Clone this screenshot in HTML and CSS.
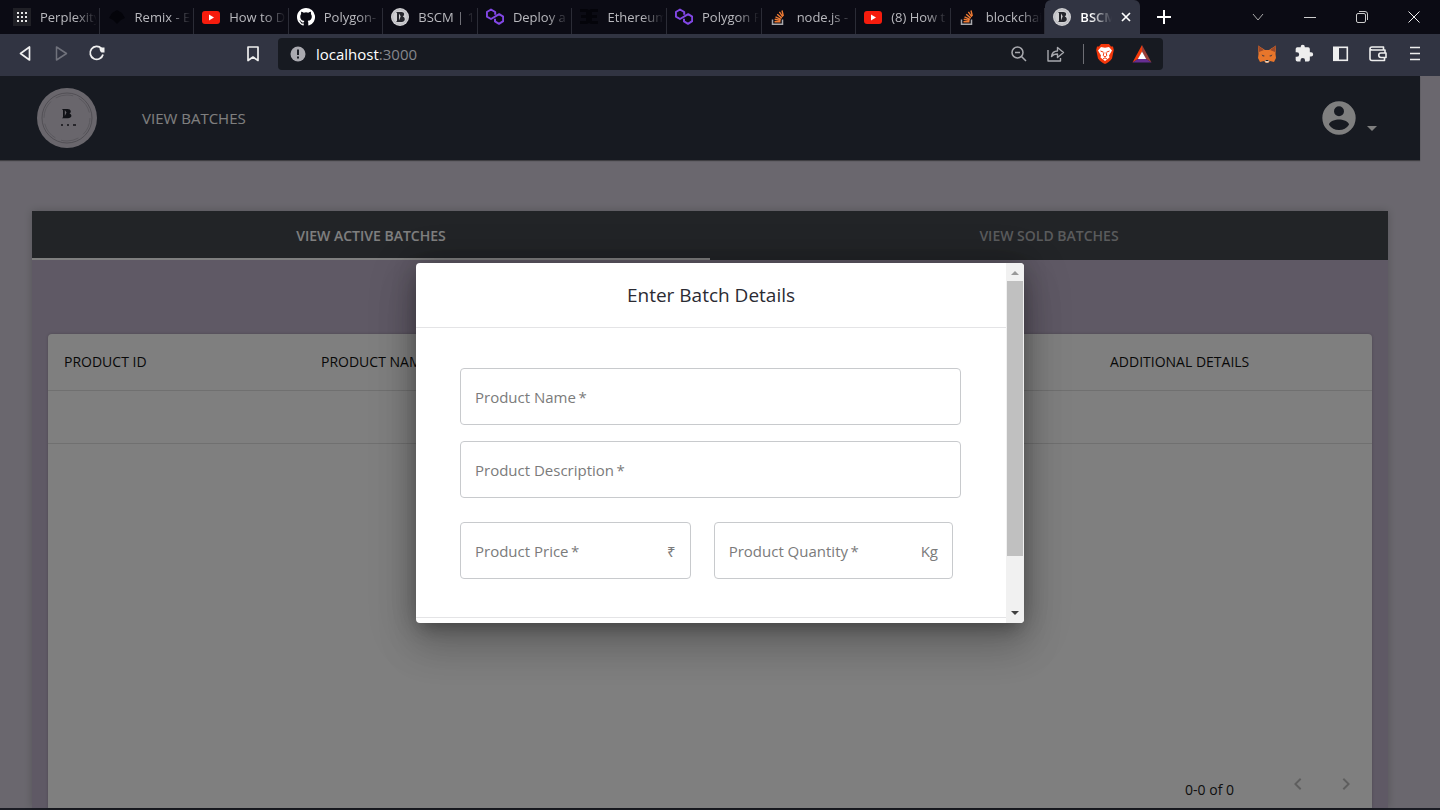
FILE: index.html
```html
<!DOCTYPE html>
<html lang="en">
<head>
<meta charset="utf-8">
<meta name="viewport" content="width=device-width, initial-scale=1">
<title>BSCM</title>
<link rel="stylesheet" href="styles.css">
</head>
<body>
<svg class="defs" aria-hidden="true">
  <symbol id="i-youtube" viewBox="0 0 18 18"><rect y="3" width="18" height="13" rx="3" fill="#f61c0d"/><path d="M7 6.5v6l5-3z" fill="#fff"/></symbol>
  <symbol id="i-polygon" viewBox="0 0 18 18"><path d="M9.200 6.800V4L5 1.500.9 4v4.600L5 11l8.200-4.800 4 2.400v4.600L13 15.800l-4-2.400v-2.600" fill="none" stroke="#8247e5" stroke-width="2" stroke-linejoin="round"/></symbol>
  <symbol id="i-stack" viewBox="0 0 18 18"><path d="M2.500 11.500v4.700h10v-4.700" fill="none" stroke="#a9a9ad" stroke-width="1.500"/><path d="M4.500 13.700h6M4.700 11.300l5.900 1.200M5.500 8.800l5.400 2.500M7.200 6.200l4.600 3.900M9.400 3.900l3.400 4.900M12 2.500l1.300 5.500" fill="none" stroke="#ef7b34" stroke-width="1.400"/></symbol>
  <symbol id="i-bscm" viewBox="0 0 18 18"><circle cx="9" cy="9" r="9" fill="#cfcfd2"/><circle cx="9" cy="9" r="7.300" fill="none" stroke="#a5a5aa" stroke-width=".5"/><path d="M5 4h5.500c3 0 3.500 3.300 1.200 4.500 3.200 1 2.600 5.500-.9 5.500H5l1-1V5zM8 5.500L9.700 8.300 8 12.500z" fill="#25262c" fill-rule="evenodd"/></symbol>
</svg>

<header class="browser">
  <div class="tabstrip">
    <nav class="tabs" aria-label="Browser tabs">
      <a class="tab" href="#"><svg class="fav" viewBox="0 0 18 18"><rect width="18" height="18" fill="#202026"/><g fill="#e6e6e6"><path d="M4 4h2v2H4zM8 4h2v2H8zM12 4h2v2h-2zM4 8h2v2H4zM8 8h2v2H8zM12 8h2v2h-2zM4 12h2v2H4zM8 12h2v2H8zM12 12h2v2h-2z"/></g></svg><span class="tab-title">Perplexity</span></a>
      <a class="tab" href="#"><svg class="fav" viewBox="0 0 18 18"><path d="M1 10l3-5 5-3 5 3 3 5-4 2-4 4-4-4z" fill="#04040a"/></svg><span class="tab-title">Remix - E</span></a>
      <a class="tab" href="#"><svg class="fav"><use href="#i-youtube"/></svg><span class="tab-title">How to D</span></a>
      <a class="tab" href="#"><svg class="fav" viewBox="0 0 16 16"><path fill="#fff" d="M8 0C3.580 0 0 3.580 0 8c0 3.540 2.290 6.530 5.470 7.590.4.070.55-.17.55-.38v-1.490c-2.010.37-2.530-.49-2.690-.94-.09-.23-.48-.94-.82-1.130-.28-.15-.68-.52-.01-.53.63-.01 1.080.58 1.230.82.72 1.210 1.870.87 2.330.66.07-.52.28-.87.51-1.070-1.780-.2-3.640-.89-3.640-3.950 0-.87.31-1.590.82-2.150-.08-.2-.36-1.020.08-2.120 0 0 .67-.21 2.200.82a7.400 7.400 0 014 0c1.530-1.040 2.200-.82 2.200-.82.44 1.100.16 1.920.08 2.120.51.56.82 1.270.82 2.150 0 3.070-1.870 3.750-3.650 3.950.29.25.54.73.54 1.480v2.200c0 .21.15.46.55.38A8 8 0 008 0z"/></svg><span class="tab-title">Polygon-</span></a>
      <a class="tab" href="#"><svg class="fav"><use href="#i-bscm"/></svg><span class="tab-title">BSCM | 1</span></a>
      <a class="tab" href="#"><svg class="fav"><use href="#i-polygon"/></svg><span class="tab-title">Deploy a</span></a>
      <a class="tab" href="#"><svg class="fav" viewBox="0 0 18 18"><path d="M0 1h7l2 1 2-1h7v3h-6v3h5v3h-5v3h6v3h-7l-2-1-2 1H0v-3h6v-3H1V7h5V4H0z" fill="#04040a"/></svg><span class="tab-title">Ethereum</span></a>
      <a class="tab" href="#"><svg class="fav"><use href="#i-polygon"/></svg><span class="tab-title">Polygon F</span></a>
      <a class="tab" href="#"><svg class="fav"><use href="#i-stack"/></svg><span class="tab-title">node.js -</span></a>
      <a class="tab" href="#"><svg class="fav"><use href="#i-youtube"/></svg><span class="tab-title">(8) How t</span></a>
      <a class="tab" href="#"><svg class="fav"><use href="#i-stack"/></svg><span class="tab-title">blockchai</span></a>
      <a class="tab tab-active" href="#"><svg class="fav"><use href="#i-bscm"/></svg><span class="tab-title">BSCM</span><svg class="tab-close" viewBox="0 0 10 10"><path d="M1 1l8 8M9 1L1 9" stroke="#fff" stroke-width="1.700"/></svg></a>
    </nav>
    <button class="new-tab" aria-label="New tab"><svg width="14" height="14" viewBox="0 0 14 14"><path d="M7 0v14M0 7h14" stroke="#fff" stroke-width="2"/></svg></button>
    <div class="window-controls">
      <button aria-label="Search tabs"><svg width="12" height="12" viewBox="0 0 12 12"><path d="M1 3l5 6 5-6" fill="none" stroke="#aaa"/></svg></button>
      <button aria-label="Minimize"><svg width="12" height="12" viewBox="0 0 12 12"><path d="M0 6.500h12" stroke="#ccc"/></svg></button>
      <button aria-label="Restore"><svg width="12" height="12" viewBox="0 0 12 12"><rect x=".5" y="2.500" width="9" height="9" rx="1.500" fill="none" stroke="#ccc"/><path d="M3 .5h6Q11.500.5 11.500 3v6" fill="none" stroke="#ccc"/></svg></button>
      <button aria-label="Close"><svg width="12" height="12" viewBox="0 0 12 12"><path d="M.5.5l11 11M11.500.5l-11 11" stroke="#eee"/></svg></button>
    </div>
  </div>

  <div class="toolbar">
    <div class="nav-buttons">
      <button aria-label="Back"><svg class="ico" viewBox="0 0 20 20"><path d="M14.500 3v13L5.500 9.500z" fill="none" stroke="#f0f0f0" stroke-width="1.700" stroke-linejoin="round"/></svg></button>
      <button aria-label="Forward"><svg class="ico" viewBox="0 0 20 20"><path d="M5.500 3v13l10-6.500z" fill="none" stroke="#70727c" stroke-width="1.500" stroke-linejoin="round"/></svg></button>
      <button aria-label="Reload"><svg class="ico" viewBox="0 0 20 20"><path d="M14.500 4.500A6.500 6.500 0 1 0 16 10.500" fill="none" stroke="#f0f0f0" stroke-width="1.800"/><path d="M12.500 3.500h5v5h-3q-2-1-2-5z" fill="#f0f0f0"/></svg></button>
      <button class="bookmark" aria-label="Bookmark"><svg class="ico" viewBox="0 0 20 20"><path d="M5 3h10v13.500l-5-3.500-5 3.500z" fill="none" stroke="#eee" stroke-width="1.700" stroke-linejoin="round"/></svg></button>
    </div>
    <div class="address">
      <svg class="site-info" viewBox="0 0 16 16"><circle cx="8" cy="8" r="7.500" fill="#aaaab0"/><path d="M8 3.500v5.500M8 10.500v2" stroke="#171a21" stroke-width="1.900"/></svg>
      <a class="url" href="#">localhost<span>:3000</span></a>
      <button aria-label="Zoom"><svg class="ico" viewBox="0 0 20 20"><circle cx="8.500" cy="8.500" r="5.500" fill="none" stroke="#a8a9ae" stroke-width="1.500"/><path d="M6 8.500h5M12.500 12.500l4.500 4.500" stroke="#a8a9ae" stroke-width="1.500"/></svg></button>
      <button aria-label="Share"><svg class="ico" viewBox="0 0 20 20"><path d="M2 6v11h12.500v-3M5.500 12.500c.5-4 3-5.500 6-5.500V3.500l6 5-6 5V10c-3 0-4.500.5-6 2.500z" fill="none" stroke="#a8a9ae" stroke-width="1.400" stroke-linejoin="round"/></svg></button>
      <button class="brave" aria-label="Brave Shields"><svg class="ico" viewBox="0 0 20 20"><path d="M6 0h8l2 2.500h2l.8 3.500L17 14.500c-2 3-5 4.500-7 5.500-2-1-5-2.500-7-5.500L1.200 6 2 2.500h2z" fill="#f4380c"/><path d="M6 3l4 .7L14 3l3 3.500-3 5 .5 2L10 17l-4.500-3.500.5-2-3-5z" fill="#fff"/><path d="M5.500 7l3 1.200M14.500 7l-3 1.200M9 8.500l-.8 3L10 13l1.800-1.500-.8-3M8 15l2-1.200 2 1.200" fill="none" stroke="#f4380c" stroke-width="1"/></svg></button>
      <button aria-label="Brave Rewards"><svg class="ico" viewBox="0 0 20 20"><path d="M10 1L.5 18.500 6 15l4-7z" fill="#f53a0a"/><path d="M10 1v7l4 7 5.500 3.500z" fill="#9a3f38"/><path d="M.5 18.500h19L14 15H6z" fill="#662d91"/><path d="M10 7.500L5.800 15h8.400z" fill="#fff"/></svg></button>
    </div>
    <div class="extensions">
      <button aria-label="MetaMask"><svg class="ico" viewBox="0 0 20 20"><path d="M1 1.500l7 4.500h4l7-4.500-.5 8.500.5 4-2 4-4-1-2 2H9l-2-2-4 1-2-4 .5-4z" fill="#e8762b"/><path d="M1 1.500l6 4.500-5 2zM19 1.500L13 6l5 2z" fill="#9c4a2a"/><path d="M4.500 10.500L8 12l-2 .5zM15.500 10.500L12 12l2 .5z" fill="#333544"/><path d="M8 16h4l-.5 2.500h-3z" fill="#dcd4cc"/><path d="M8.500 16h3v1h-3z" fill="#222"/></svg></button>
      <button aria-label="Extensions"><svg class="ico" viewBox="0 0 24 24"><path fill="#eee" d="M20.500 10H19V6a2 2 0 0 0-2-2h-4V3.500a2.500 2.500 0 0 0-5 0V4H4a2 2 0 0 0-2 2v3.800h1.500a2.700 2.700 0 0 1 0 5.400H2V19a2 2 0 0 0 2 2h3.800v-1.500a2.700 2.700 0 0 1 5.400 0V21H17a2 2 0 0 0 2-2v-4h1.500a2.500 2.500 0 0 0 0-5z"/></svg></button>
      <button aria-label="Sidebar"><svg class="ico" viewBox="0 0 20 20"><rect x="2.800" y="3.300" width="13.500" height="13" fill="none" stroke="#eee" stroke-width="1.600"/><path d="M3 3.500h5v12.500H3z" fill="#eee"/></svg></button>
      <button aria-label="Wallet"><svg class="ico" viewBox="0 0 20 20"><path d="M15.500 6V3H4a2 2 0 0 0-2 2v9.500a2 2 0 0 0 2 2h12.500v-3M2 5l1.500 1h13.500v3M18 9h-5a2.200 2.200 0 0 0 0 4.500h5z" fill="none" stroke="#eee" stroke-width="1.600" stroke-linejoin="round"/></svg></button>
      <button aria-label="Menu"><svg class="ico" viewBox="0 0 20 20"><path d="M5 3.500h10M5 9.500h10M5 15.500h10" stroke="#eee" stroke-width="1.700"/></svg></button>
    </div>
  </div>
</header>

<div class="page">
  <div class="app">
    <header class="appbar">
      <svg class="logo" viewBox="0 0 60 60" role="img" aria-label="BSCM"><circle cx="30" cy="30" r="30" fill="#d2cdd8"/><circle cx="30" cy="30" r="25" fill="none" stroke="#a39eaa"/><circle cx="30" cy="30" r="23" fill="none" stroke="#b5b0bc" stroke-dasharray="18 6"/><path d="M25 21h5.500c4 0 4 3.500 2 4.500 3 1 2.500 4.700-1.500 4.700h-6l1-1v-7zM27.800 22l1.700 2.500-1.700 3.500z" fill="#20222c" fill-rule="evenodd"/><path d="M24 36h2v2h-2zM30 36h2v2h-2zM36 36h3v2h-3z" fill="#4e4c57"/></svg>
      <a class="appbar-link" href="#">VIEW BATCHES</a>
      <button class="account" aria-label="Account"><svg width="40" height="40" viewBox="0 0 24 24"><path fill="#fff" fill-rule="evenodd" d="M12 2a10 10 0 1 0 0 20 10 10 0 0 0 0-20zm0 3a3 3 0 1 1 0 6 3 3 0 0 1 0-6zm0 14.200a7.200 7.200 0 0 1-6-3.200c0-2 4-3.100 6-3.100s6 1.100 6 3.100a7.200 7.200 0 0 1-6 3.200z"/></svg><span class="caret"></span></button>
    </header>

    <main class="panel">
      <div class="panel-tabs" role="tablist">
        <button role="tab" aria-selected="true" class="selected">VIEW ACTIVE BATCHES</button>
        <button role="tab" aria-selected="false">VIEW SOLD BATCHES</button>
      </div>
      <section class="card">
        <table class="batches">
          <thead><tr><th class="c-id">PRODUCT ID</th><th class="c-name">PRODUCT NAME</th><th></th><th class="c-more">ADDITIONAL DETAILS</th></tr></thead>
          <tbody><tr><td></td><td></td><td></td><td></td></tr></tbody>
        </table>
        <div class="pagination">
          <span class="count">0-0 of 0</span>
          <button aria-label="Previous page"><svg width="24" height="24" viewBox="0 0 24 24"><path fill="#bdbdbd" d="M15.400 7.400L14 6l-6 6 6 6 1.400-1.400L10.800 12z"/></svg></button>
          <button aria-label="Next page"><svg width="24" height="24" viewBox="0 0 24 24"><path fill="#bdbdbd" d="M10 6L8.600 7.400l4.600 4.600-4.600 4.600L10 18l6-6z"/></svg></button>
        </div>
      </section>
    </main>
  </div>

  <div class="backdrop">
    <div class="dialog" role="dialog" aria-labelledby="dialog-title">
      <form class="dialog-body">
        <h2 id="dialog-title">Enter Batch Details</h2>
        <div class="fields">
          <div class="field"><label for="name">Product Name&#8201;*</label><input id="name" type="text"></div>
          <div class="field"><label for="description">Product Description&#8201;*</label><input id="description" type="text"></div>
          <div class="field-row">
            <div class="field"><label for="price">Product Price&#8201;*</label><input id="price" type="text"><span>₹</span></div>
            <div class="field"><label for="quantity">Product Quantity&#8201;*</label><input id="quantity" type="text"><span>Kg</span></div>
          </div>
        </div>
      </form>
      <div class="scrollbar" aria-hidden="true"><span class="arrow-up"></span><span class="thumb"></span><span class="track"></span><span class="arrow-down"></span></div>
    </div>
  </div>
</div>
<footer class="taskbar"></footer>
</body>
</html>
```

FILE: styles.css
```css
* { box-sizing: border-box; }

body {
  margin: 0;
  height: 100vh;
  display: flex;
  flex-direction: column;
  overflow: hidden;
  font-family: "Open Sans", "Noto Sans", sans-serif;
  font-size: 15px;
  background: #6a676e;
}

button {
  display: flex;
  align-items: center;
  justify-content: center;
  margin: 0;
  padding: 0;
  border: 0;
  background: none;
  font: inherit;
  color: inherit;
}

a { color: inherit; text-decoration: none; }
svg { display: block; flex: none; }
.defs { position: absolute; width: 0; height: 0; }
.ico { width: 20px; height: 20px; }

/* Browser tabs */
.browser { flex: none; color: #b9b9be; }
.tabstrip { display: flex; height: 34px; background: #0b0b14; }
.tabs { display: flex; flex: 0 1 1135px; min-width: 0; margin-left: 5px; }
.tab {
  display: flex;
  align-items: center;
  flex: 1 1 0;
  min-width: 0;
  gap: 9px;
  padding: 0 3px 0 8px;
  font-size: 13px;
  background: linear-gradient(#2b2c36, #2b2c36) right bottom / 1px 26px no-repeat;
}
.fav { width: 18px; height: 18px; }
.tab-title {
  flex: 1;
  min-width: 0;
  overflow: hidden;
  white-space: nowrap;
  mask-image: linear-gradient(to right, #000 calc(100% - 22px), transparent);
}
.tab-active {
  border-radius: 6px 6px 0 0;
  background: #313442;
  color: #fff;
  font-weight: 600;
}
.tab-close { width: 10px; height: 10px; margin-right: 6px; }
.new-tab { width: 24px; margin-left: 12px; }
.window-controls { display: flex; margin-left: auto; }
.window-controls button { width: 52px; }

/* Browser toolbar */
.toolbar { display: flex; align-items: center; height: 42px; padding-bottom: 2px; background: #313442; }
.nav-buttons { display: flex; gap: 16px; width: 278px; padding: 0 15px; }
.bookmark { margin-left: auto; }
.address {
  display: flex;
  align-items: center;
  flex: 1;
  gap: 17px;
  height: 32px;
  padding: 0 11px 0 12px;
  border-radius: 4px;
  background: #171a21;
}
.site-info { width: 16px; height: 16px; }
.url { flex: 1; margin-left: -7px; color: #fff; font-size: 15px; }
.url span { color: #85868c; }
.brave { padding-left: 11px; border-left: 1px solid #6d6e74; }
.extensions { display: flex; justify-content: flex-end; gap: 17px; width: 277px; padding-right: 15px; }

/* Application */
.page { position: relative; flex: 1; min-height: 0; display: flex; background: #d4cfdc; }
.app { flex: 1; display: flex; flex-direction: column; padding-right: 20px; }
.appbar {
  display: flex;
  align-items: center;
  height: 84px;
  padding: 0 43px 0 37px;
  background: #2f3543;
  color: #fff;
  box-shadow: 0 1px 1px #00000066;
}
.logo { width: 60px; height: 60px; }
.appbar-link { margin-left: 45px; font-size: 15px; }
.account { margin-left: auto; gap: 8px; }
.caret { margin-top: 20px; border: 5px solid transparent; border-top-color: #fff; border-bottom: 0; }

.panel {
  display: flex;
  flex-direction: column;
  flex: 1;
  margin: 51px 32px 0;
  background: #beb2ca;
  box-shadow: 0 0 8px #00000033;
}
.panel-tabs { display: flex; height: 49px; background: #44484f; color: #b4b6b9; }
.panel-tabs button { flex: 1; padding-top: 2px; font-size: 14px; font-weight: 600; border-bottom: 2px solid transparent; }
.panel-tabs .selected { color: #fff; border-color: #fff; }

.card {
  display: flex;
  flex-direction: column;
  flex: 1;
  margin: 74px 16px 0;
  border-radius: 4px 4px 0 0;
  background: #fff;
  box-shadow: 0 0 3px #00000033;
}
.batches { width: 100%; border-collapse: collapse; table-layout: fixed; color: #111; }
.batches th { height: 56px; padding: 0 16px; text-align: left; white-space: nowrap; font-size: 14px; font-weight: 500; border-bottom: 1px solid #e0e0e0; }
.batches td { height: 53px; border-bottom: 1px solid #e0e0e0; }
.c-id { width: 257px; }
.c-name { width: 20%; }
.c-more { width: 21%; }
.pagination { display: flex; justify-content: flex-end; margin-top: auto; padding-right: 2px; color: #222; }
.pagination button { width: 48px; height: 48px; }
.count { padding-top: 20px; margin-right: 40px; font-size: 14px; }

/* Dialog */
.backdrop {
  position: absolute;
  inset: 0;
  display: flex;
  align-items: center;
  justify-content: center;
  padding-top: 2px;
  background: rgba(0, 0, 0, 0.5);
}
.dialog {
  display: flex;
  width: 608px;
  max-width: 90%;
  height: 360px;
  overflow: hidden;
  border-radius: 4px;
  background: #fff;
  box-shadow: 0 11px 15px -7px #00000033, 0 24px 38px 3px #00000024, 0 9px 46px 8px #0000001f, 0 0 24px #00000033;
}
.dialog-body { flex: 1; min-width: 0; }
.dialog h2 {
  margin: 0;
  height: 65px;
  line-height: 64px;
  border-bottom: 1px solid #e4e4e6;
  text-align: center;
  font-size: 19px;
  font-weight: 500;
  color: #2b2b33;
}
.fields {
  display: flex;
  flex-direction: column;
  gap: 16px;
  height: 290px;
  padding: 40px 45px 0 44px;
  border-bottom: 1px solid #e4e4e6;
}
.field {
  display: flex;
  align-items: center;
  height: 57px;
  padding: 0 14px;
  border: 1px solid #c8cacd;
  border-radius: 4px;
  color: #7b7b7b;
}
.field label { white-space: nowrap; }
.field input { flex: 1; min-width: 0; border: 0; outline: 0; background: none; font: inherit; }
.field-row { display: flex; gap: 23px; padding: 8px 8px 0 0; }
.field-row .field { flex: 230 1 0; min-width: 0; }
.field-row .field + .field { flex-grow: 240; }
.scrollbar { display: flex; flex-direction: column; align-items: center; width: 18px; padding: 8px 1px; background: #f1f1f1; }
.arrow-up { flex: none; margin-bottom: 6px; border: 4px solid transparent; border-top: 0; border-bottom-color: #999; }
.arrow-down { border: 4px solid transparent; border-bottom: 0; border-top-color: #404040; }
.thumb { width: 100%; flex: 272; background: #c0c0c0; }
.track { flex: 54; }

.taskbar { flex: none; height: 2px; background: #1b1c24; }
```
